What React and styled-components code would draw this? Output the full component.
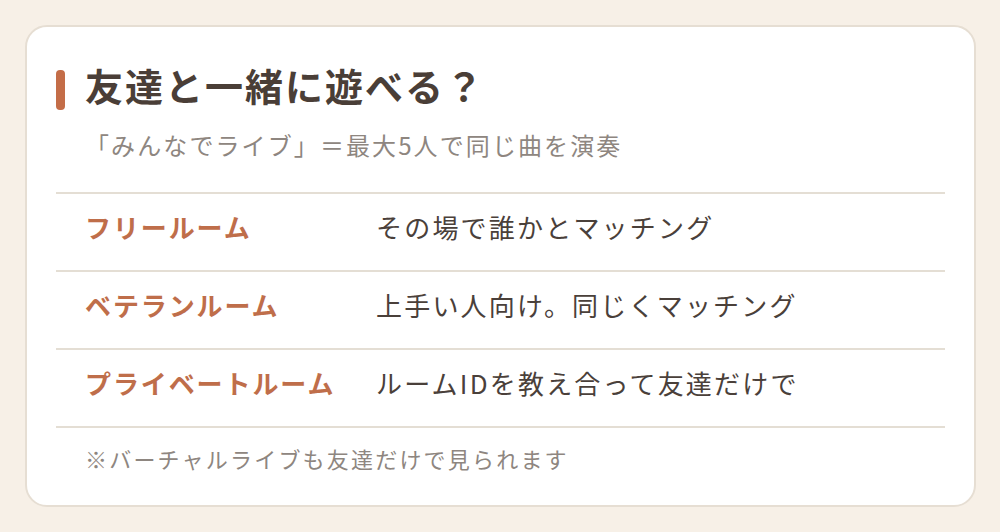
import styled, { createGlobalStyle } from "styled-components";

const GlobalStyle = createGlobalStyle`
	html, body {
		margin: 0;
		padding: 0;
		background: #f7f0e7;
	}
	body {
		font-family: "Noto Sans CJK JP", "Noto Sans", sans-serif;
	}
`;

const rooms = [
	{ name: "フリールーム", desc: "その場で誰かとマッチング" },
	{ name: "ベテランルーム", desc: "上手い人向け。同じくマッチング" },
	{ name: "プライベートルーム", desc: "ルームIDを教え合って友達だけで" },
];

function App() {
	return (
		<>
			<GlobalStyle />
			<Page>
				<Card>
					<Header>
						<AccentBar />
						<Title>友達と一緒に遊べる？</Title>
					</Header>
					<Subtitle>「みんなでライブ」＝最大5人で同じ曲を演奏</Subtitle>
					{rooms.map((room) => (
						<Row key={room.name}>
							<RoomName>{room.name}</RoomName>
							<RoomDesc>{room.desc}</RoomDesc>
						</Row>
					))}
					<Note>※バーチャルライブも友達だけで見られます</Note>
				</Card>
			</Page>
		</>
	);
}

const Page = styled.div`
	width: 1000px;
	height: 532px;
	box-sizing: border-box;
	padding: 25px 24px 25px 25px;
	background: #f7f0e7;
`;

const Card = styled.div`
	display: flex;
	flex-direction: column;
	box-sizing: border-box;
	height: 482px;
	padding: 42px 29px 0;
	background: #ffffff;
	border: 2px solid #e6ded3;
	border-radius: 22px;
`;

const Header = styled.div`
	display: flex;
	align-items: center;
	gap: 20px;
	height: 40px;
`;

const AccentBar = styled.div`
	width: 9px;
	height: 40px;
	border-radius: 4px;
	background: #c46d48;
	transform: translateY(1px);
`;

const Title = styled.h1`
	margin: 0;
	font-size: 38px;
	line-height: 40px;
	font-weight: 700;
	letter-spacing: 2px;
	color: #4a3e37;
	transform: translateY(-4px);
`;

const Subtitle = styled.p`
	margin: 21px 0 32px;
	padding-left: 29px;
	font-size: 24px;
	line-height: 30px;
	letter-spacing: 2.1px;
	color: #8e8680;
`;

const Row = styled.div`
	display: grid;
	grid-template-columns: 291px 1fr;
	align-items: center;
	height: 78px;
	box-sizing: border-box;
	padding: 0 0 12px 29px;
	border-top: 2px solid #e4ded4;
`;

const RoomName = styled.span`
	font-size: 26px;
	font-weight: 700;
	letter-spacing: 1.9px;
	color: #bf6e4a;
`;

const RoomDesc = styled.span`
	font-size: 26px;
	letter-spacing: 2.2px;
	color: #4a403a;
`;

const Note = styled.p`
	margin: 0;
	padding: 15px 0 0 29px;
	border-top: 2px solid #e4ded4;
	font-size: 22px;
	line-height: 30px;
	letter-spacing: 2.2px;
	color: #8e8680;
`;

export default App;
